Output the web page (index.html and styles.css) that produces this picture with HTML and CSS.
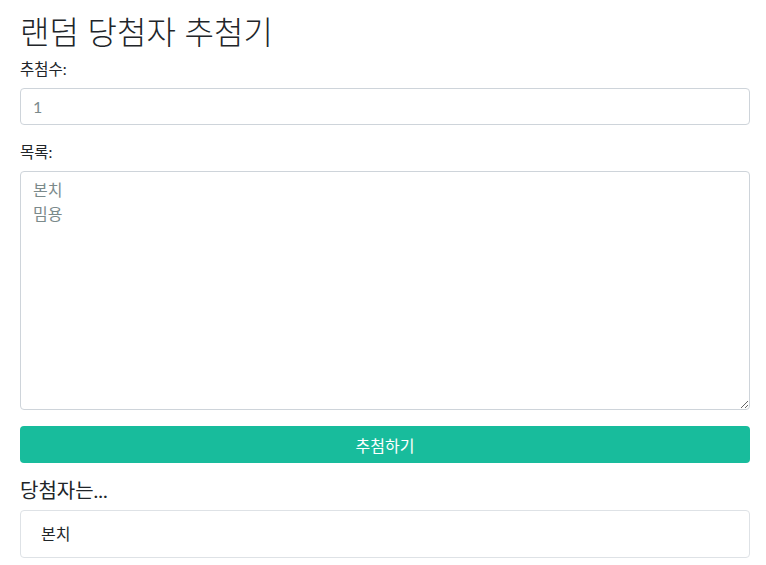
FILE: index.html
```html
<!DOCTYPE html>
<html lang="ko">
<head>
<meta charset="utf-8">
<title>랜덤 당첨자 추첨기</title>
<link rel="stylesheet" href="styles.css">
</head>
<body>
<main class="container">
  <h1 class="title">랜덤 당첨자 추첨기</h1>
  <div class="group">
    <label class="label" for="count">추첨수:</label>
    <input class="field" id="count" type="text" placeholder="1">
  </div>
  <div class="group group-last">
    <label class="label" for="list">목록:</label>
    <textarea class="field area" id="list" placeholder="본치&#10;밈용"></textarea>
  </div>
  <button class="btn" type="button">추첨하기</button>
  <h4 class="subtitle">당첨자는...</h4>
  <div class="result">본치</div>
</main>
</body>
</html>
```

FILE: styles.css
```css
* { box-sizing: border-box; }
html, body { margin: 0; padding: 0; background: #fff; }
body {
  font-family: Lato, "Noto Sans CJK KR", sans-serif;
  font-size: 16px;
  line-height: 1.5;
  color: #212529;
}
.container {
  padding: 13px 16px 0 20px;
  display: flex;
  flex-direction: column;
}
.title {
  font-size: 32px;
  font-weight: 300;
  line-height: 38px;
  margin: 0 0 6px;
  color: #212529;
}
.group {
  display: flex;
  flex-direction: column;
  margin-bottom: 15px;
}
.group-last { margin-bottom: 16px; }
.label {
  font-size: 15.5px;
  line-height: 24px;
  margin-bottom: 7px;
}
.field {
  font-family: Lato, "Noto Sans CJK KR", sans-serif;
  font-size: 16px;
  height: 37px;
  padding: 6px 12px;
  border: 1px solid #ced4da;
  border-radius: 4px;
  color: #212529;
  background: #fff;
  outline: none;
}
.field::placeholder { color: #7b8a8b; opacity: 1; }
.area {
  height: 239px;
  line-height: 24px;
  padding: 6px 12px;
  resize: vertical;
}
.btn {
  font-family: Lato, "Noto Sans CJK KR", sans-serif;
  font-size: 16px;
  height: 37px;
  border: 0;
  border-radius: 4px;
  background: #18bc9c;
  color: #fff;
  cursor: pointer;
}
.subtitle {
  font-size: 20px;
  font-weight: 400;
  line-height: 24px;
  margin: 15px 0 8px;
  color: #212529;
}
.result {
  border: 1px solid #dee2e6;
  border-radius: 4px;
  padding: 11px 20px;
  font-size: 16px;
  line-height: 24px;
}
```
